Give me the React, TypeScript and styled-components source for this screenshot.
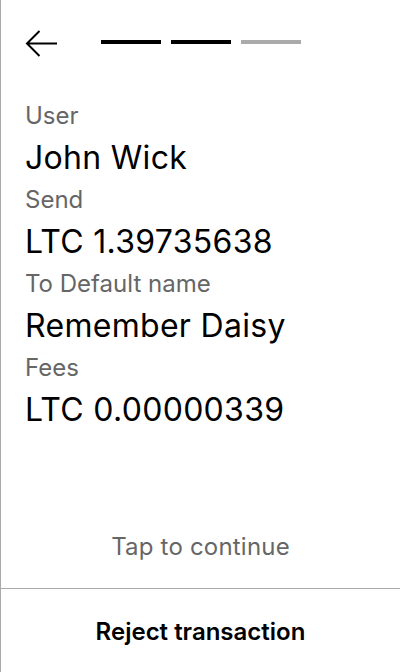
import React from "react";
import styled, { createGlobalStyle } from "styled-components";

const Global = createGlobalStyle`
  html, body { margin: 0; padding: 0; background: #fff; }
  body { font-family: Inter, "Noto Sans", sans-serif; }
  * { box-sizing: border-box; }
`;

const Screen = styled.div`
  width: 400px;
  height: 672px;
  display: flex;
  flex-direction: column;
  border-left: 1px solid #aaaaaa;
  background: #fff;
  color: #000;
`;

const Header = styled.div`
  display: flex;
  align-items: flex-start;
  padding: 30px 0 0 24px;
  height: 95px;
`;

const BackButton = styled.button`
  border: none;
  background: none;
  padding: 0;
  margin: 0;
  width: 32px;
  height: 28px;
  display: flex;
  cursor: pointer;
`;

const Steps = styled.div`
  display: flex;
  gap: 10px;
  margin-left: 44px;
  margin-top: 10px;
`;

const Step = styled.div<{ $active: boolean }>`
  width: 60px;
  height: 4px;
  background: ${(p) => (p.$active ? "#000" : "#aaaaaa")};
`;

const Content = styled.div`
  flex: 1;
  padding: 0 24px;
  display: flex;
  flex-direction: column;
`;

const Label = styled.div`
  font-size: 24px;
  line-height: 42px;
  color: #666666;
`;

const Value = styled.div`
  font-size: 32px;
  line-height: 42px;
  color: #000;
  letter-spacing: 0.3px;
`;

const Hint = styled.div`
  text-align: center;
  font-size: 24px;
  line-height: 40px;
  color: #666666;
  padding-bottom: 21px;
  letter-spacing: 0.2px;
`;

const Footer = styled.button`
  border: none;
  border-top: 1px solid #aaaaaa;
  background: none;
  height: 84px;
  font-family: Inter, "Noto Sans", sans-serif;
  font-size: 24px;
  font-weight: 600;
  color: #000;
  padding: 2px 0 0;
  cursor: pointer;
`;

const rows = [
  ["User", "John Wick"],
  ["Send", "LTC 1.39735638"],
  ["To Default name", "Remember Daisy"],
  ["Fees", "LTC 0.00000339"],
];

export default function App() {
  return (
    <>
      <Global />
      <Screen>
        <Header>
          <BackButton aria-label="Back">
            <svg width="32" height="28" viewBox="0 0 32 28" fill="none">
              <path d="M32 13.5H2.5M14.5 1L2 13.5L14.5 26" stroke="#000" strokeWidth="2" />
            </svg>
          </BackButton>
          <Steps>
            <Step $active />
            <Step $active />
            <Step $active={false} />
          </Steps>
        </Header>
        <Content>
          {rows.map(([l, v]) => (
            <React.Fragment key={l}>
              <Label>{l}</Label>
              <Value>{v}</Value>
            </React.Fragment>
          ))}
        </Content>
        <Hint>Tap to continue</Hint>
        <Footer>Reject transaction</Footer>
      </Screen>
    </>
  );
}
